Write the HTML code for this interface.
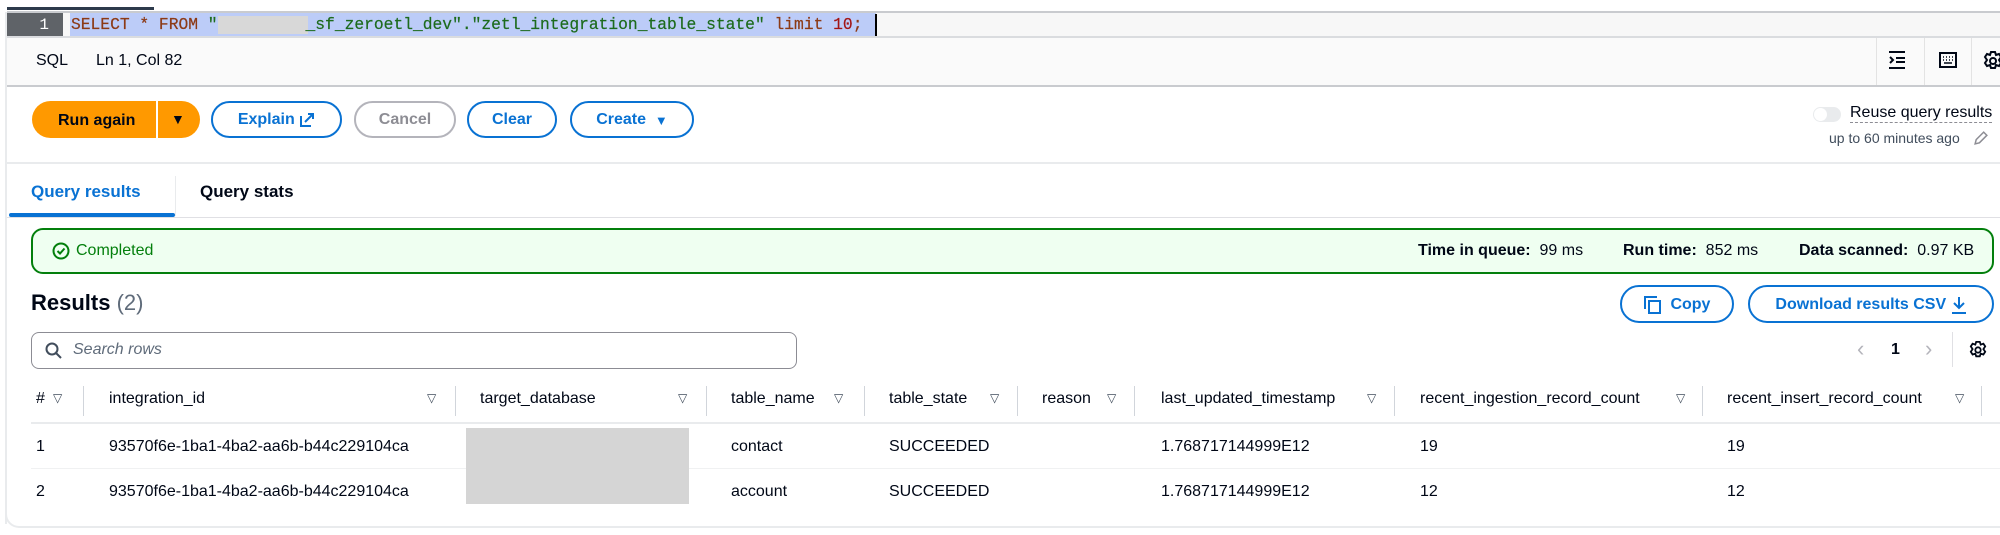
<!DOCTYPE html>
<html><head><meta charset="utf-8"><style>
*{margin:0;padding:0;box-sizing:border-box}
body{width:2000px;height:535px;background:#fff;position:relative;overflow:hidden;font-family:"Liberation Sans",sans-serif;color:#000716;font-size:16px}
.a{position:absolute;white-space:nowrap}
.btn{position:absolute;height:37px;border:2px solid #0972d3;border-radius:20px;color:#0972d3;font-weight:bold;font-size:16px;display:flex;align-items:center;justify-content:center;background:#fff;padding-top:1px}
.th{position:absolute;top:390px;font-size:16px;color:#000716}
.tri{position:absolute;top:391px;font-size:12px;color:#414d5c}
.sep{position:absolute;top:386px;width:1px;height:30px;background:#d1d5db}
.td{position:absolute;font-size:16px;color:#000716}
</style></head><body>
<div class="a" style="left:5px;top:12px;width:2px;height:512px;background:#e9ebed"></div>
<div class="a" style="left:5px;top:510px;width:20px;height:18px;border-left:2px solid #e9ebed;border-bottom:2px solid #e9ebed;border-bottom-left-radius:14px"></div>
<div class="a" style="left:20px;top:526px;width:1980px;height:2px;background:#e9ebed"></div>
<div class="a" style="left:7px;top:7px;width:147px;height:3px;background:#2d3a4b"></div>
<div class="a" style="left:7px;top:11px;width:1993px;height:2px;background:#c9cbcf"></div>
<div class="a" style="left:7px;top:13px;width:1993px;height:24px;background:#f7f7f7"></div>
<div class="a" style="left:7px;top:13px;width:56px;height:24px;background:#5f6368;color:#fff;font-family:'Liberation Mono',monospace;font-size:16px;line-height:24px;text-align:right;padding-right:14px">1</div>
<div class="a" style="left:70px;top:13px;width:806px;height:24px;background:#bcccf8"></div>
<div class="a" style="left:218px;top:16px;width:90px;height:18px;background:#d8d8d8"></div>
<div class="a" style="left:71px;top:13px;font-family:'Liberation Mono',monospace;font-size:16.3px;line-height:24px;color:#8c3a16;-webkit-text-stroke:0.2px">SELECT * FROM <span style="color:#1d6b1d">"<span style="color:transparent">xxxxxxxxx</span>_sf_zeroetl_dev"."zetl_integration_table_state"</span> limit <span style="color:#a31515">10</span>;</div>
<div class="a" style="left:875px;top:14px;width:2px;height:22px;background:#000"></div>
<div class="a" style="left:7px;top:36px;width:1993px;height:2px;background:#dadcdf"></div>
<div class="a" style="left:7px;top:38px;width:1993px;height:47px;background:#fafafa"></div>
<div class="a" style="left:36px;top:52px;font-size:16px">SQL</div>
<div class="a" style="left:96px;top:52px;font-size:16px">Ln 1, Col 82</div>
<div class="a" style="left:1876px;top:38px;width:1px;height:47px;background:#e3e3e3"></div>
<div class="a" style="left:1924px;top:38px;width:1px;height:47px;background:#e3e3e3"></div>
<div class="a" style="left:1971px;top:38px;width:1px;height:47px;background:#e3e3e3"></div>
<svg class="a" style="left:1888px;top:51px" width="18" height="18" viewBox="0 0 18 18" fill="none" stroke="#000716" stroke-width="2"><path d="M1 1h16M1 17h16M8 7h9M8 11h9M2 6l3 3-3 3"/></svg>
<svg class="a" style="left:1939px;top:52px" width="18" height="16" viewBox="0 0 18 16" fill="none" stroke="#000716" stroke-width="2"><rect x="1" y="1" width="16" height="14"/><path d="M4 5h1M7 5h1M10 5h1M13 5h1M4 8h1M7 8h1M10 8h1M13 8h1M5 11h8" stroke-width="1.5"/></svg>
<svg class="a" style="left:1983px;top:51px" width="20" height="20" viewBox="0 0 20 20" fill="none" stroke="#000716" stroke-width="2"><circle cx="10" cy="10" r="3"/><path d="M8 1h4l1 3 3-1 2 3-2 3 2 3-2 3-3-1-1 3H8l-1-3-3 1-2-3 2-3-2-3 2-3 3 1z"/></svg>
<div class="a" style="left:7px;top:85px;width:1993px;height:2px;background:#c9cbcf"></div>
<div class="a" style="left:32px;top:101px;width:168px;height:37px;background:#ff9900;border-radius:20px"></div>
<div class="a" style="left:156px;top:101px;width:2px;height:37px;background:#fff"></div>
<div class="a" style="left:58px;top:112px;font-weight:bold;font-size:16px;color:#000716">Run again</div>
<div class="a" style="left:171px;top:111px;font-size:14px;color:#000716">▼</div>
<div class="btn" style="left:211px;top:101px;width:131px">Explain&nbsp;<svg width="16" height="16" viewBox="0 0 16 16" fill="none" stroke="#0972d3" stroke-width="2"><path d="M2 4v10h10M6 10l8-8M9 2h5v5"/></svg></div>
<div class="btn" style="left:354px;top:101px;width:102px;border-color:#b4b4bb;color:#8d8d94">Cancel</div>
<div class="btn" style="left:467px;top:101px;width:90px">Clear</div>
<div class="btn" style="left:570px;top:101px;width:124px">Create&nbsp;&nbsp;<span style="font-size:13px">▼</span></div>
<div class="a" style="left:1813px;top:107px;width:28px;height:15px;border-radius:8px;background:#e9ebed"></div>
<div class="a" style="left:1814px;top:108px;width:13px;height:13px;border-radius:7px;background:#fff"></div>
<div class="a" style="left:1850px;top:103px;font-size:16px;border-bottom:1px dashed #8d8d94;line-height:19px">Reuse query results</div>
<div class="a" style="left:1829px;top:130px;font-size:14px;color:#414d5c">up to 60 minutes ago</div>
<svg class="a" style="left:1973px;top:130px" width="16" height="16" viewBox="0 0 15 15" fill="none" stroke="#8d8d94" stroke-width="1.4"><path d="M2 13l1-4 7-7 3 3-7 7z"/></svg>
<div class="a" style="left:7px;top:162px;width:1993px;height:2px;background:#e9ebed"></div>
<div class="a" style="left:31px;top:182px;font-size:17px;font-weight:bold;color:#0972d3">Query results</div>
<div class="a" style="left:175px;top:176px;width:1px;height:40px;background:#e9ebed"></div>
<div class="a" style="left:200px;top:182px;font-size:17px;font-weight:bold;color:#000716">Query stats</div>
<div class="a" style="left:7px;top:217px;width:1993px;height:1px;background:#e0e0e4"></div>
<div class="a" style="left:9px;top:213px;width:166px;height:4px;border-radius:2px;background:#0972d3"></div>
<div class="a" style="left:31px;top:228px;width:1963px;height:46px;border:2px solid #037f0c;border-radius:12px;background:#effff1"></div>
<svg class="a" style="left:52px;top:242px" width="18" height="18" viewBox="0 0 18 18" fill="none" stroke="#037f0c" stroke-width="2"><circle cx="9" cy="9" r="7.5"/><path d="M5.5 9l2.5 2.5 4.5-5"/></svg>
<div class="a" style="left:76px;top:242px;color:#037f0c;font-size:16px">Completed</div>
<div class="a" style="left:1418px;top:242px;font-size:16px"><b>Time in queue:</b>&nbsp; 99 ms</div>
<div class="a" style="left:1623px;top:242px;font-size:16px"><b>Run time:</b>&nbsp; 852 ms</div>
<div class="a" style="left:1799px;top:242px;font-size:16px"><b>Data scanned:</b>&nbsp; 0.97 KB</div>
<div class="a" style="left:31px;top:290px;font-size:22px;font-weight:bold">Results <span style="font-weight:normal;color:#5f6b7a">(2)</span></div>
<div class="btn" style="left:1620px;top:285px;width:114px;height:38px"><svg width="18" height="18" viewBox="0 0 18 18" fill="none" stroke="#0972d3" stroke-width="2"><path d="M1 13V1h12"/><rect x="5" y="5" width="11" height="12"/></svg>&nbsp;&nbsp;Copy</div>
<div class="btn" style="left:1748px;top:285px;width:246px;height:38px">Download results CSV&nbsp;<svg width="16" height="18" viewBox="0 0 16 18" fill="none" stroke="#0972d3" stroke-width="2"><path d="M8 1v11M3 7l5 5 5-5M1 17h14"/></svg></div>
<div class="a" style="left:31px;top:332px;width:766px;height:37px;border:1px solid #8c8c94;border-radius:8px"></div>
<svg class="a" style="left:45px;top:342px" width="17" height="17" viewBox="0 0 17 17" fill="none" stroke="#414d5c" stroke-width="2"><circle cx="7" cy="7" r="5.5"/><path d="M11 11l5 5"/></svg>
<div class="a" style="left:73px;top:341px;font-style:italic;color:#5f6b7a;font-size:16px">Search rows</div>
<div class="a" style="left:1857px;top:336px;font-size:22px;color:#b4b4bb">‹</div>
<div class="a" style="left:1891px;top:341px;font-size:16px;font-weight:bold">1</div>
<div class="a" style="left:1925px;top:336px;font-size:22px;color:#b4b4bb">›</div>
<div class="a" style="left:1952px;top:332px;width:1px;height:35px;background:#e0e0e4"></div>
<svg class="a" style="left:1969px;top:341px" width="18" height="18" viewBox="0 0 20 20" fill="none" stroke="#000716" stroke-width="2"><circle cx="10" cy="10" r="3"/><path d="M8 1h4l1 3 3-1 2 3-2 3 2 3-2 3-3-1-1 3H8l-1-3-3 1-2-3 2-3-2-3 2-3 3 1z"/></svg>
<div class="th" style="left:36px">#</div><div class="tri" style="left:53px">▽</div><div class="sep" style="left:83px"></div>
<div class="th" style="left:109px">integration_id</div><div class="tri" style="left:427px">▽</div><div class="sep" style="left:455px"></div>
<div class="th" style="left:480px">target_database</div><div class="tri" style="left:678px">▽</div><div class="sep" style="left:706px"></div>
<div class="th" style="left:731px">table_name</div><div class="tri" style="left:834px">▽</div><div class="sep" style="left:864px"></div>
<div class="th" style="left:889px">table_state</div><div class="tri" style="left:990px">▽</div><div class="sep" style="left:1017px"></div>
<div class="th" style="left:1042px">reason</div><div class="tri" style="left:1107px">▽</div><div class="sep" style="left:1134px"></div>
<div class="th" style="left:1161px">last_updated_timestamp</div><div class="tri" style="left:1367px">▽</div><div class="sep" style="left:1394px"></div>
<div class="th" style="left:1420px">recent_ingestion_record_count</div><div class="tri" style="left:1676px">▽</div><div class="sep" style="left:1702px"></div>
<div class="th" style="left:1727px">recent_insert_record_count</div><div class="tri" style="left:1955px">▽</div><div class="sep" style="left:1981px"></div>
<div class="a" style="left:31px;top:422px;width:1969px;height:2px;background:#e9ebed"></div>
<div class="a" style="left:31px;top:468px;width:1969px;height:1px;background:#f0f1f2"></div>
<div class="a" style="left:466px;top:428px;width:223px;height:76px;background:#d5d5d5"></div>
<div class="td" style="left:36px;top:438px">1</div>
<div class="td" style="left:109px;top:438px">93570f6e-1ba1-4ba2-aa6b-b44c229104ca</div>
<div class="td" style="left:731px;top:438px">contact</div>
<div class="td" style="left:889px;top:438px">SUCCEEDED</div>
<div class="td" style="left:1161px;top:438px">1.768717144999E12</div>
<div class="td" style="left:1420px;top:438px">19</div>
<div class="td" style="left:1727px;top:438px">19</div>
<div class="td" style="left:36px;top:483px">2</div>
<div class="td" style="left:109px;top:483px">93570f6e-1ba1-4ba2-aa6b-b44c229104ca</div>
<div class="td" style="left:731px;top:483px">account</div>
<div class="td" style="left:889px;top:483px">SUCCEEDED</div>
<div class="td" style="left:1161px;top:483px">1.768717144999E12</div>
<div class="td" style="left:1420px;top:483px">12</div>
<div class="td" style="left:1727px;top:483px">12</div>
</body></html>
